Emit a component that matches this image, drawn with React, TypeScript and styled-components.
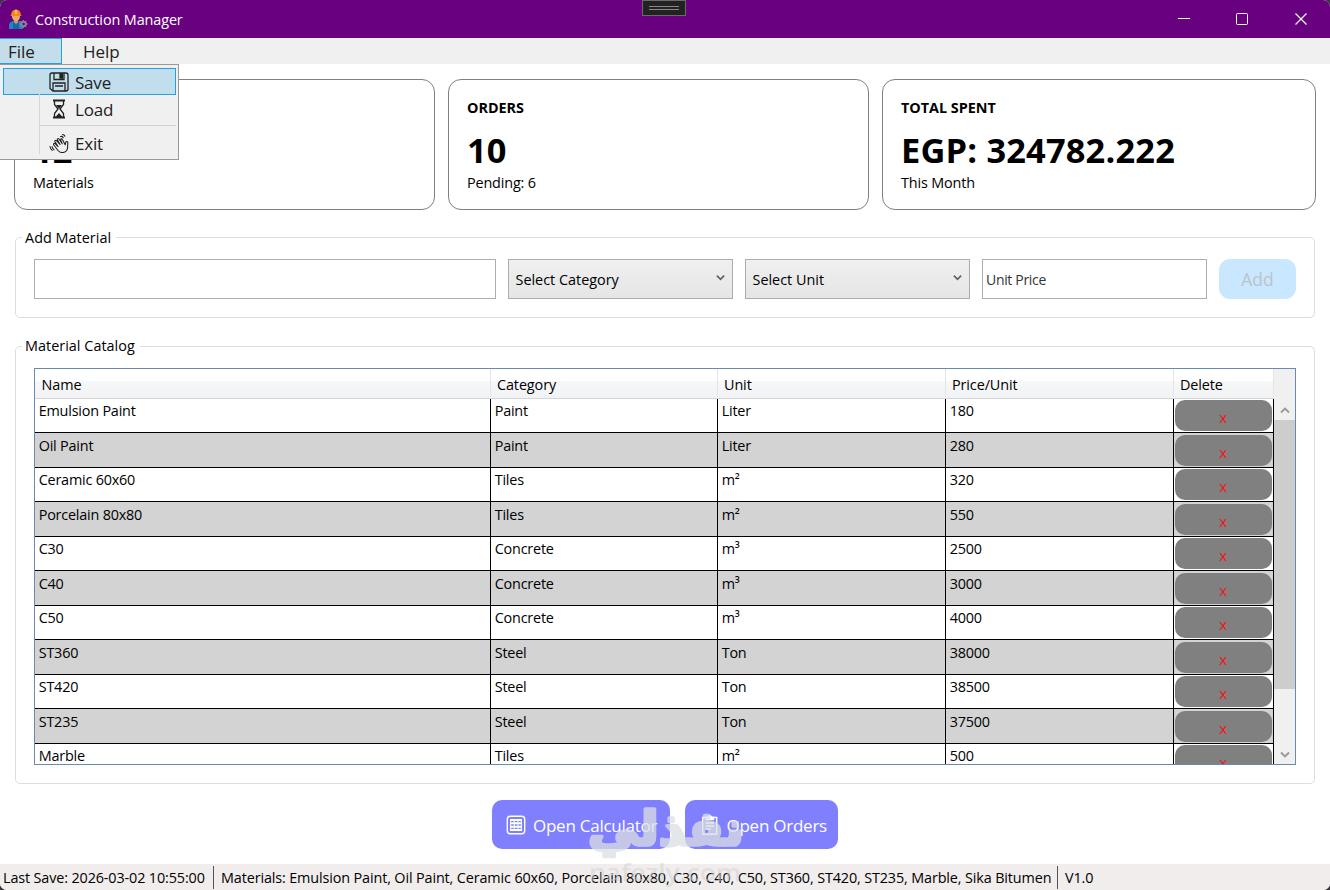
import React from "react";
import styled, { createGlobalStyle } from "styled-components";

const Global = createGlobalStyle`
  *, *::before, *::after { box-sizing: border-box; }
  html, body { margin: 0; padding: 0; background: #3b3540; }
  body { font-family: "Open Sans", "Noto Sans", sans-serif; font-size: 14.4px; color: #000; }
`;

const Window = styled.div`
  position: relative;
  width: 1330px;
  height: 890px;
  display: flex;
  flex-direction: column;
  background: #fff;
  border-radius: 7px;
  overflow: hidden;
`;

const TitleBar = styled.header`
  position: relative;
  flex: none;
  height: 38px;
  display: flex;
  align-items: center;
  padding-left: 8px;
  background: #68007f;
  color: #fff;
`;

const WindowTitle = styled.span`
  flex: 1;
  margin-left: 7px;
  font-size: 14.4px;
  letter-spacing: -0.1px;
`;

const DebugHandle = styled.div`
  position: absolute;
  left: 642px;
  top: 0;
  width: 44px;
  height: 16px;
  background: #222;
  border: 1px solid #6a6a6a;
  padding: 5px 6px;
  &::before {
    content: "";
    display: block;
    height: 4px;
    border-top: 1px solid #888;
    border-bottom: 1px solid #888;
  }
`;

const CaptionButton = styled.span`
  width: 58.5px;
  height: 38px;
  display: flex;
  align-items: center;
  justify-content: center;
`;

const MenuBar = styled.nav`
  flex: none;
  height: 26px;
  display: flex;
  background: #f0f0f0;
  color: #212121;
`;

const MenuHead = styled.div<{ $open?: boolean; $width: number }>`
  position: relative;
  width: ${(p) => p.$width}px;
  height: 26px;
  padding-left: ${(p) => (p.$open ? 8 : 20)}px;
  border: 1px solid ${(p) => (p.$open ? "#26a0da" : "transparent")};
  border-left-width: ${(p) => (p.$open ? 0 : 1)}px;
  background: ${(p) => (p.$open ? "#c3deea" : "transparent")};
  font-size: 17px;
  line-height: 25px;
`;

const Popup = styled.div`
  position: absolute;
  z-index: 5;
  left: 0;
  top: 25px;
  width: 179px;
  height: 96px;
  padding: 3px 2px 0 3px;
  background: #f0f0f0;
  border: 1px solid #999;
  border-left: 0;
  &::before {
    content: "";
    position: absolute;
    left: 39px;
    top: 5px;
    height: 84px;
    width: 1px;
    background: #d7d7d7;
  }
`;

const PopupItem = styled.div<{ $active?: boolean }>`
  height: 27px;
  display: flex;
  align-items: center;
  gap: 6px;
  padding-left: 45px;
  padding-top: 1px;
  font-size: 17px;
  letter-spacing: -0.2px;
  background: ${(p) => (p.$active ? "rgba(145, 203, 231, 0.5)" : "transparent")};
  border: 1px solid ${(p) => (p.$active ? "#26a0da" : "transparent")};
`;

const PopupRule = styled.div`
  height: 1px;
  margin: 3px 0 3px 37px;
  background: #d0d0d0;
`;

const Content = styled.main`
  flex: 1;
  min-height: 0;
  display: flex;
  flex-direction: column;
  padding: 15px 14px 0;
`;

const Cards = styled.section`
  display: grid;
  grid-template-columns: 421px 421px 434px;
  gap: 13px;
`;

const Card = styled.article`
  height: 131px;
  padding: 18px 18px;
  border: 1px solid #808080;
  border-radius: 13px;
`;

const CardTitle = styled.div`
  height: 20px;
  line-height: 20px;
  font-weight: 700;
  letter-spacing: -0.02px;
`;

const CardValue = styled.div`
  height: 46px;
  line-height: 46px;
  margin-top: 9px;
  font-size: 34.4px;
  font-weight: 700;
  letter-spacing: 0.18px;
`;

const CardNote = styled.div`
  height: 20px;
  line-height: 20px;
  letter-spacing: -0.15px;
`;

const Group = styled.fieldset<{ $height: number; $top: number }>`
  height: ${(p) => p.$height}px;
  min-width: 0;
  margin: ${(p) => p.$top}px 1px 0;
  padding: 0 18px;
  border: 1px solid #d5dfe5;
  border-radius: 5px;
`;

const Legend = styled.legend<{ $drop?: boolean }>`
  height: 20px;
  line-height: ${(p) => (p.$drop ? 22 : 20)}px;
  margin-left: -12px;
  padding: 0 5px 0 3px;
  letter-spacing: 0.03px;
`;

const Form = styled.div`
  display: grid;
  grid-template-columns: 462px 225px 225px 225px 77px;
  column-gap: 12px;
  margin-top: 12px;
`;

const Field = styled.div`
  height: 40px;
  line-height: 39px;
  padding-left: 3px;
  border: 1px solid #abadb3;
  background: #fff;
  font-size: 14px;
  letter-spacing: -0.32px;
  color: #333;
`;

const Combo = styled.div`
  height: 40px;
  display: flex;
  align-items: center;
  justify-content: space-between;
  padding: 0 7px 0 6.5px;
  border: 1px solid #acacac;
  background: linear-gradient(#f0f0f0, #e5e5e5);
  svg { margin-top: -4px; }
`;

const AddButton = styled.button`
  height: 40px;
  padding: 0;
  border: 0;
  border-radius: 11px;
  background: #c9e7ff;
  color: #bcc4c8;
  font: 17.5px "Open Sans", sans-serif;
`;

const Catalog = styled.div`
  height: 397px;
  margin-top: 12px;
  display: flex;
  border: 1px solid #688caf;
  overflow: hidden;
`;

const Grid = styled.div`
  width: 1239px;
  flex: none;
`;

const columns = "456px 227px 228px 228px 100px";

const HeadRow = styled.div`
  display: grid;
  grid-template-columns: ${columns};
  height: 29.5px;
  border-bottom: 1px solid #d5d5d5;
  background: linear-gradient(#fff 0%, #fff 40%, #f7f8fa 41%, #f1f2f4 100%);
`;

const HeadCell = styled.div`
  padding-left: 6px;
  line-height: 32px;
  height: 28px;
  letter-spacing: -0.1px;
  border-right: 1px solid #e2e4e6;
  &:first-child { padding-left: 6.6px; }
`;

const Row = styled.div<{ $alt: boolean }>`
  display: grid;
  grid-template-columns: ${columns};
  height: 34.55px;
  background: ${(p) => (p.$alt ? "#d3d3d3" : "#fff")};
  border-bottom: 1px solid #000;
`;

const Cell = styled.div`
  padding: 2.5px 0 0 3.7px;
  line-height: 20px;
  letter-spacing: -0.2px;
  border-right: 1px solid #000;
`;

const DeleteCell = styled.div`
  padding: 1.5px 2px 1px 1px;
  border-right: 1px solid #000;
`;

const DeleteButton = styled.button`
  display: block;
  width: 96.5px;
  height: 31px;
  padding: 3px 0 0;
  border: 0;
  border-radius: 10px;
  background: #808080;
  color: #f11414;
  font: 15px "Open Sans", sans-serif;
`;

const ScrollBar = styled.div`
  flex: 1;
  display: flex;
  flex-direction: column;
  align-items: center;
  background: #f0f0f0;
`;

const ScrollCap = styled.div<{ $height: number }>`
  height: ${(p) => p.$height}px;
  display: flex;
  align-items: flex-end;
`;

const Thumb = styled.div`
  width: 100%;
  height: 269px;
  background: #cdcdcd;
`;

const Actions = styled.div`
  display: flex;
  gap: 15px;
  margin: 16px 0 0 477.5px;
`;

const ActionButton = styled.button<{ $width: number }>`
  width: ${(p) => p.$width}px;
  height: 49px;
  display: flex;
  align-items: center;
  gap: 7px;
  padding: 1px 0 0 14.5px;
  border: 0;
  border-radius: 10px;
  background: #8080ff;
  color: #fff;
  font: 17px "Open Sans", sans-serif;
  letter-spacing: -0.25px;
  white-space: nowrap;
`;

const StatusBar = styled.footer`
  flex: none;
  height: 26px;
  display: flex;
  align-items: center;
  background: #f1eded;
  white-space: nowrap;
`;

const StatusText = styled.span<{ $width: number }>`
  width: ${(p) => p.$width}px;
  padding-left: 3px;
  letter-spacing: -0.13px;
`;

const StatusRule = styled.span`
  width: 1px;
  height: 23px;
  margin-right: 4px;
  background: #555;
`;

const Watermark = styled.svg`
  position: absolute;
  left: 575px;
  top: 795px;
  pointer-events: none;
`;

const Chevron = ({ up, color = "#606060", w = 10 }: { up?: boolean; color?: string; w?: number }) => (
  <svg width={w} height="7" viewBox="0 0 10 7" fill="none" stroke={color} strokeWidth="1.9">
    <path d={up ? "M1 5.5 5 1.5 9 5.5" : "M1 1.5 5 5.5 9 1.5"} />
  </svg>
);

const WorkerIcon = () => (
  <svg width="20" height="21" viewBox="0 0 20 21">
    <path d="M1 20v-3.500c0-3 2-4.500 4.500-4.500h5c2.500 0 4.500 1.500 4.500 4.500V20z" fill="#2581c4" />
    <path d="M5 12l3 4 3-4v8H5z" fill="#1767a5" />
    <path d="M6 10h4v3l-2 2-2-2z" fill="#d9964e" />
    <ellipse cx="8" cy="7.500" rx="4" ry="4.600" fill="#e7ac6c" />
    <path d="M3.200 6C3.200 2.500 5.400.7 8 .7s4.800 1.800 4.800 5.300l1 .9H2.200z" fill="#f08a1d" />
    <path d="M7 .7h2v4.300H7z" fill="#ffc34a" />
    <circle cx="15.500" cy="15" r="2.200" fill="none" stroke="#8b8698" strokeWidth="1.700" />
    <path d="M15.500 11v1.500M15.500 17.500V19M11.500 15H13M18 15h1.500M12.700 12.200l1 1M18.300 17.800l-1-1M18.300 12.200l-1 1M12.700 17.800l1-1" stroke="#8b8698" strokeWidth="1.400" />
  </svg>
);

const SaveIcon = () => (
  <svg width="20" height="20" viewBox="0 0 20 20" fill="none" stroke="#222" strokeWidth="1.300">
    <path d="M3 1h14a2 2 0 0 1 2 2v14a2 2 0 0 1-2 2H4l-3-2.500V3a2 2 0 0 1 2-2z" />
    <path d="M5 1v6.500h10V1M4 19v-8h12v8M6 14h8" />
    <path d="M11 2h2.500v4H11z" fill="#222" />
  </svg>
);

const LoadIcon = () => (
  <svg width="20" height="20" viewBox="0 0 20 20" fill="none" stroke="#222" strokeWidth="1.300">
    <path d="M4 1.500h12M4 18.500h12" strokeWidth="2" />
    <path d="M5.500 2v3.500L9 10l-3.500 4.500V18M14.500 2v3.500L11 10l3.500 4.500V18" />
    <path d="M7 6h6l-3 4zM6.500 18l3.500-4 3.500 4z" fill="#222" stroke="none" />
  </svg>
);

const ExitIcon = () => (
  <svg width="20" height="20" viewBox="0 0 20 20" fill="none" stroke="#222" strokeWidth="1.100" strokeLinecap="round" strokeLinejoin="round">
    <path d="M9 17.500 4.800 12c-.8-1.200.8-2.200 1.600-1.200L9 13.500 6 8.800c-.7-1.200 1-2.100 1.700-1L11 11.500 8.500 7c-.6-1.300 1-2 1.700-.8l3 4.600-1.500-3.700c-.4-1.300 1.200-1.700 1.700-.6l2.800 5.300.5-2.300c.3-1.600 2.200-1.200 2.100.3l-.2 4.600c-.2 4.800-6 7-9.600 3.100z" />
    <path d="M11.500 3.500c1.200-.3 2.100.1 2.700 1.100M13.500 1.500c1.200.1 2 .7 2.400 1.700M3 13.500c.2 1.400.9 2.400 2 3.200M1 13.500c.2 1.600 1 2.900 2.200 3.900" />
  </svg>
);

const AbacusIcon = () => (
  <svg width="20" height="20" viewBox="0 0 20 20" fill="none" stroke="#fff" strokeWidth="1.400">
    <rect x="1.300" y="1.300" width="17.400" height="17.400" rx="3" />
    <path d="M4 5h12M4 8.300h12M4 11.700h12M4 15h12" strokeWidth="2.100" />
    <path d="M4.700 4v12M8.300 4v12M12 4v12M15.300 4v12" strokeWidth="1" />
  </svg>
);

const ClipboardIcon = () => (
  <svg width="20" height="20" viewBox="0 0 20 20" fill="none" stroke="#fff" strokeWidth="1.400">
    <path d="M6.500 2.500H2.700v16.800h14V2.500H13" />
    <path d="M6 4.500h7.500V2.200h-2a1.800 1.800 0 0 0-3.500 0H6z" fill="#fff" />
    <path d="M5.500 8h8.500M5.500 11h8.500M5.500 14h5.500" />
  </svg>
);

const materials = [
  ["Emulsion Paint", "Paint", "Liter", "180"],
  ["Oil Paint", "Paint", "Liter", "280"],
  ["Ceramic 60x60", "Tiles", "m²", "320"],
  ["Porcelain 80x80", "Tiles", "m²", "550"],
  ["C30", "Concrete", "m³", "2500"],
  ["C40", "Concrete", "m³", "3000"],
  ["C50", "Concrete", "m³", "4000"],
  ["ST360", "Steel", "Ton", "38000"],
  ["ST420", "Steel", "Ton", "38500"],
  ["ST235", "Steel", "Ton", "37500"],
  ["Marble", "Tiles", "m²", "500"],
];

const stats = [
  ["MATERIALS", "12", "Materials"],
  ["ORDERS", "10", "Pending: 6"],
  ["TOTAL SPENT", "EGP: 324782.222", "This Month"],
];

export default function App() {
  return (
    <>
      <Global />
      <Window>
        <TitleBar>
          <WorkerIcon />
          <WindowTitle>Construction Manager</WindowTitle>
          <DebugHandle />
          <CaptionButton>
            <svg width="12" height="12" stroke="#fff"><path d="M0 5.500h12" /></svg>
          </CaptionButton>
          <CaptionButton>
            <svg width="12" height="12" fill="none" stroke="#fff"><rect x=".5" y=".5" width="11" height="11" rx="1" /></svg>
          </CaptionButton>
          <CaptionButton>
            <svg width="12" height="12" stroke="#fff" strokeWidth="1.200"><path d="M.5.500l11 11M11.500.500l-11 11" /></svg>
          </CaptionButton>
        </TitleBar>
        <MenuBar>
          <MenuHead $open $width={62}>
            File
            <Popup>
              <PopupItem $active><SaveIcon />Save</PopupItem>
              <PopupItem><LoadIcon />Load</PopupItem>
              <PopupRule />
              <PopupItem><ExitIcon />Exit</PopupItem>
            </Popup>
          </MenuHead>
          <MenuHead $width={76}>Help</MenuHead>
        </MenuBar>
        <Content>
          <Cards>
            {stats.map(([title, value, note]) => (
              <Card key={title}>
                <CardTitle>{title}</CardTitle>
                <CardValue>{value}</CardValue>
                <CardNote>{note}</CardNote>
              </Card>
            ))}
          </Cards>
          <Group $height={91} $top={17}>
            <Legend $drop>Add Material</Legend>
            <Form>
              <Field />
              <Combo>Select Category<Chevron w={9} /></Combo>
              <Combo>Select Unit<Chevron w={9} /></Combo>
              <Field>Unit Price</Field>
              <AddButton>Add</AddButton>
            </Form>
          </Group>
          <Group $height={448} $top={18}>
            <Legend>Material Catalog</Legend>
            <Catalog>
              <Grid>
                <HeadRow>
                  {["Name", "Category", "Unit", "Price/Unit", "Delete"].map((h) => (
                    <HeadCell key={h}>{h}</HeadCell>
                  ))}
                </HeadRow>
                {materials.map((m, i) => (
                  <Row key={m[0]} $alt={i % 2 === 1}>
                    {m.map((v, j) => <Cell key={j}>{v}</Cell>)}
                    <DeleteCell><DeleteButton>x</DeleteButton></DeleteCell>
                  </Row>
                ))}
              </Grid>
              <ScrollBar>
                <ScrollCap $height={51}><svg width="10" height="14"><path d="M1 6.500 5 2.500 9 6.500" fill="none" stroke="#999" strokeWidth="1.900" /></svg></ScrollCap>
                <Thumb />
                <ScrollCap $height={69}><Chevron color="#999" /></ScrollCap>
              </ScrollBar>
            </Catalog>
          </Group>
          <Actions>
            <ActionButton $width={178.5}><AbacusIcon />Open Calculator</ActionButton>
            <ActionButton $width={153}><ClipboardIcon />Open Orders</ActionButton>
          </Actions>
        </Content>
        <StatusBar>
          <StatusText $width={213}>Last Save: 2026-03-02 10:55:00</StatusText>
          <StatusRule />
          <StatusText $width={839}>
            Materials: Emulsion Paint, Oil Paint, Ceramic 60x60, Porcelain 80x80, C30, C40, C50, ST360, ST420, ST235, Marble, Sika Bitumen
          </StatusText>
          <StatusRule />
          <StatusText $width={60}>V1.0</StatusText>
        </StatusBar>
        <Watermark width="200" height="95">
          <g opacity="0.75">
            <text x="169" y="50" direction="rtl" textLength="156" lengthAdjust="spacingAndGlyphs" fontFamily="DejaVu Sans" fontWeight="700" fontSize="47" fill="#dcdfe2" stroke="#dcdfe2" strokeWidth="3.500" strokeLinejoin="round">نفذلي</text>
          </g>
          <text x="14" y="86" textLength="152" lengthAdjust="spacingAndGlyphs" fontFamily="Open Sans" fontWeight="600" fontSize="24" fill="#d0d0d0" fillOpacity="0.5">nafezly.com</text>
        </Watermark>
      </Window>
    </>
  );
}
